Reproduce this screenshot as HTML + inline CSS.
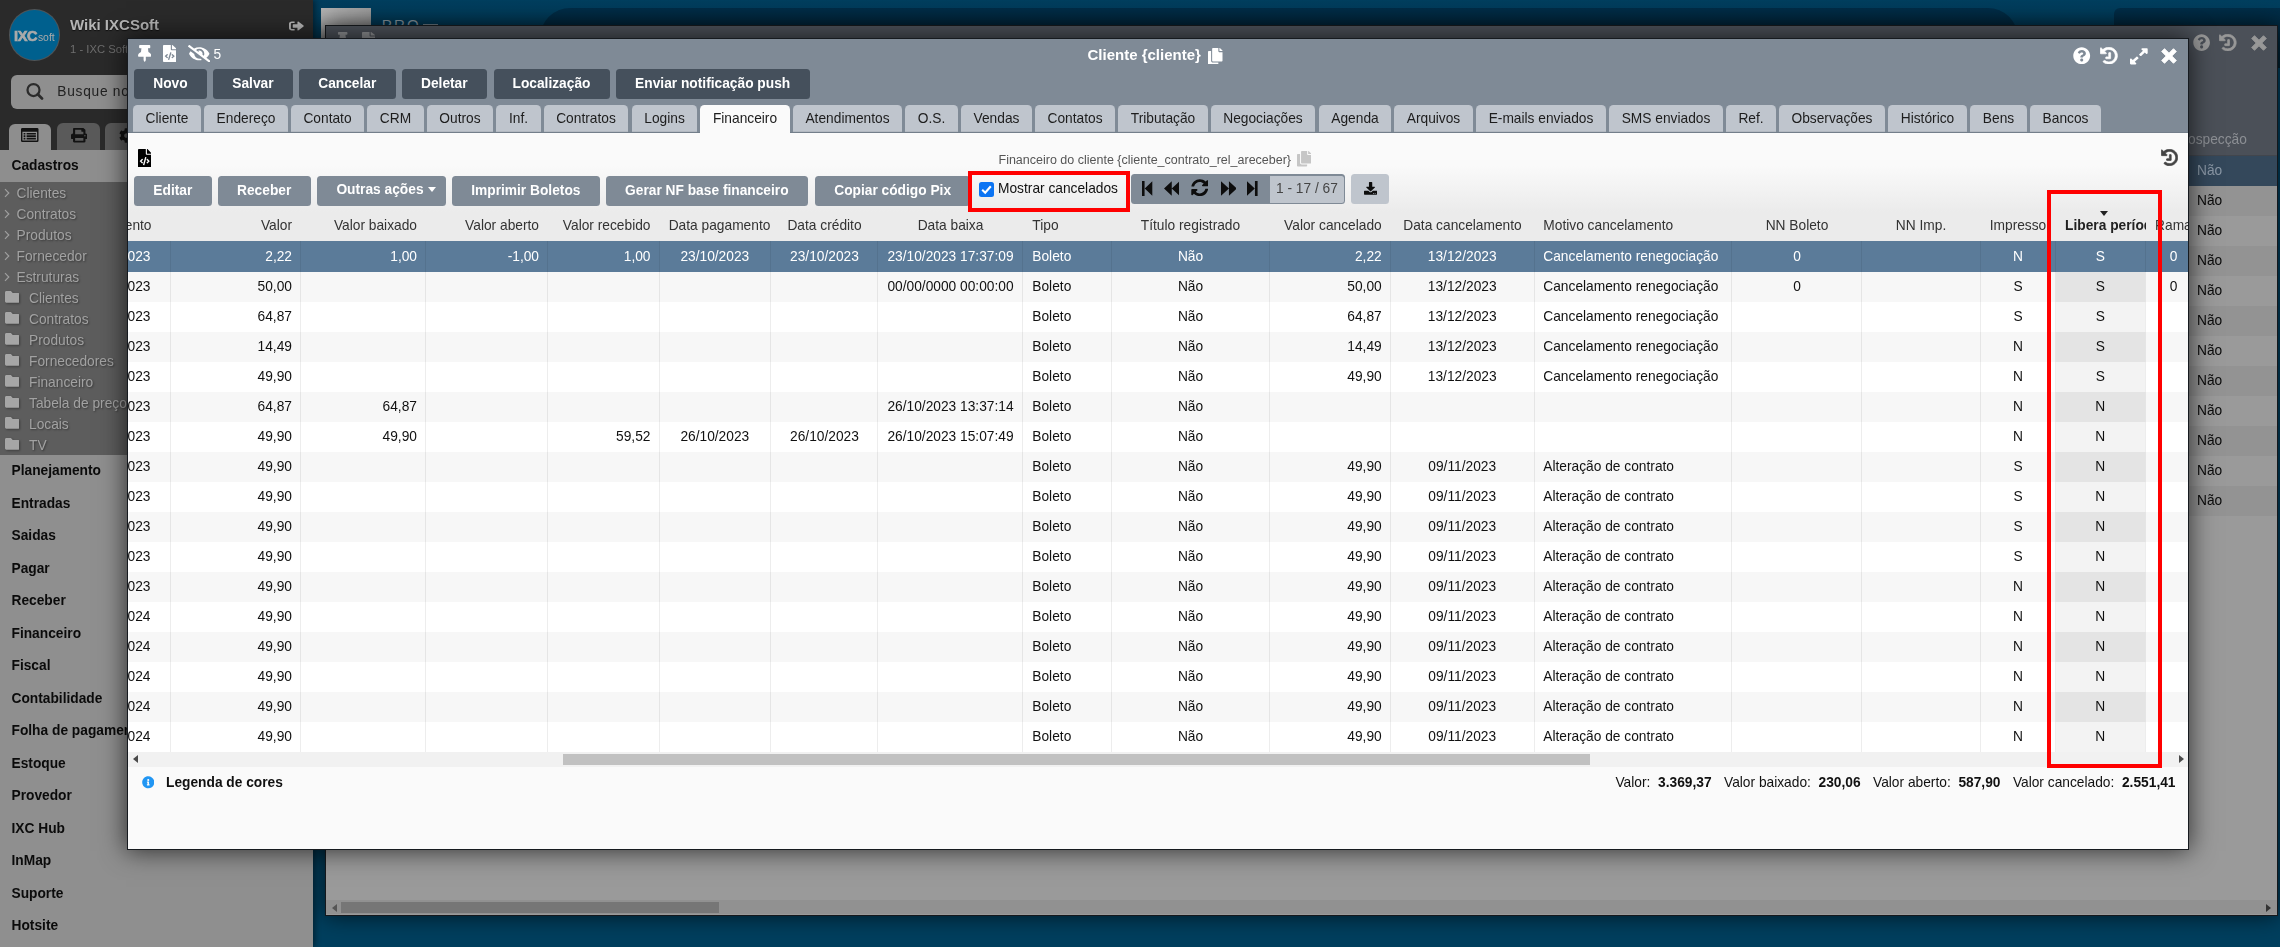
<!DOCTYPE html><html><head><meta charset="utf-8"><title>Cliente</title><style>
*{box-sizing:border-box;margin:0;padding:0}
html,body{width:2280px;height:947px;overflow:hidden}
body{background:#003f5e;font-family:"Liberation Sans",sans-serif;font-size:13.75px;color:#111;position:relative}
.abs{position:absolute}
.t{position:absolute;white-space:nowrap;line-height:16px;margin-top:1px}
.b{font-weight:bold}
#side{will-change:transform;position:absolute;left:0;top:0;width:313px;height:947px;background:#8f8f8f;overflow:hidden;box-shadow:2px 0 6px rgba(0,0,0,.45)}
#bgwin{will-change:transform;position:absolute;left:324.5px;top:25px;width:1952.5px;height:890.5px;background:#9a9a9a;border:1px solid #15181c;overflow:hidden;box-shadow:0 0 22px rgba(0,0,0,.65)}
#modal{will-change:transform;position:absolute;left:128px;top:39px;width:2060px;height:810px;background:#fafafa;overflow:hidden}
#mshadow{position:absolute;left:127px;top:38px;width:2062px;height:812px;box-shadow:0 0 24px 1px rgba(0,0,0,.68);border:1px solid #161a1f}
.btn{position:absolute;top:30.2px;height:29.7px;background:#45505c;border-radius:3.5px;color:#fff;font-weight:bold;text-align:center;line-height:30.5px;white-space:nowrap}
.tb{position:absolute;top:137.2px;height:29.6px;background:#7f8a96;border-radius:3.5px;color:#fff;font-weight:bold;text-align:center;line-height:30.5px;white-space:nowrap}
.tab{position:absolute;top:66px;height:26.8px;background:#bfc5cd;border-radius:4.5px 4.5px 0 0;color:#1d1d1d;text-align:center;line-height:27px;white-space:nowrap;border-bottom:1px solid #b3b9c1}
.tab.act{background:#fafafa;height:28.2px;border-bottom:none}
.row{position:absolute;left:0;width:2060px;height:30px}
.c{position:absolute;top:0;height:30px;line-height:30px;white-space:nowrap}
.vl{position:absolute;top:202px;width:1px;height:511px;background:rgba(0,0,0,.07)}
.h{position:absolute;top:179px;line-height:16px;color:#333;white-space:nowrap}
.si{position:absolute;margin-top:1px;left:16.5px;text-shadow:1px 1px 2px rgba(0,0,0,.4);color:#a2a2a2;line-height:16px;white-space:nowrap}
.sf{position:absolute;margin-top:1px;left:29px;text-shadow:1px 1px 2px rgba(0,0,0,.4);color:#a2a2a2;line-height:16px;white-space:nowrap}
.sm{position:absolute;margin-top:1px;left:11.5px;color:#0b0b0b;font-weight:bold;line-height:16px;white-space:nowrap}
.ft span{margin-left:12.4px}.ft b{margin-left:7.7px}
.bn{position:absolute;left:1871px;line-height:16px;white-space:nowrap;color:#0a0a0a}
</style></head><body>
<div class="abs" style="left:0;top:0;width:2280px;height:30px;background:linear-gradient(#003f5f,#00395680)"></div>
<div class="abs" style="left:540px;top:7.5px;width:1478px;height:60px;border-radius:34px;background:linear-gradient(#002e49,#00202f)"></div>
<div class="abs" style="left:2114px;top:7.5px;width:220px;height:60px;border-radius:6px;background:linear-gradient(#002e49,#00202f)"></div>
<div class="abs" style="left:321px;top:8px;width:50px;height:40px;background:linear-gradient(135deg,#b5b5b5,#8f8f8f)"></div>
<div class="t" style="left:381.7px;top:14.5px;font-size:15px;letter-spacing:2.2px;color:#93a4b0;line-height:18px">PRO</div><div class="abs" style="left:422.8px;top:23.6px;width:15.5px;height:1.5px;background:#7f8f9b"></div>
<div id="bgwin">
<div class="abs" style="left:0;top:0;width:1951px;height:130px;background:#4b5058;border-bottom:1px solid #42464d"></div>
<svg style="position:absolute;left:11.3px;top:5.8px;width:11.4px;height:14px;" viewBox="0 0 384 512" preserveAspectRatio="none"><path fill="#8f9194" d="M298.028 214.267L285.793 96H328c13.255 0 24-10.745 24-24V24c0-13.255-10.745-24-24-24H56C42.745 0 32 10.745 32 24v48c0 13.255 10.745 24 24 24h42.207L85.972 214.267C37.465 236.82 0 277.261 0 328c0 13.255 10.745 24 24 24h136v104.007c0 1.242.289 2.467.845 3.578l24 48c2.941 5.882 11.364 5.893 14.311 0l24-48a8.008 8.008 0 0 0 .845-3.578V352h136c13.255 0 24-10.745 24-24 0-51.183-37.983-91.42-85.972-113.733z"/></svg>
<svg style="position:absolute;left:36px;top:5.8px;width:13px;height:14px;" viewBox="0 0 384 512" preserveAspectRatio="none"><path fill="#8f9194" d="M384 121.941V128H256V0h6.059c6.365 0 12.47 2.529 16.971 7.029l97.941 97.941A24.005 24.005 0 0 1 384 121.941zM248 160c-13.2 0-24-10.8-24-24V0H24C10.745 0 0 10.745 0 24v464c0 13.255 10.745 24 24 24h336c13.255 0 24-10.745 24-24V160H248zM123.206 400.505a5.4 5.4 0 0 1-7.633.246l-64.866-60.812a5.4 5.4 0 0 1 0-7.879l64.866-60.812a5.4 5.4 0 0 1 7.633.246l19.579 20.885a5.4 5.4 0 0 1-.372 7.747L101.65 336l40.763 35.874a5.4 5.4 0 0 1 .372 7.747l-19.579 20.884zm51.295 50.479l-27.453-7.97a5.402 5.402 0 0 1-3.681-6.692l61.44-211.626a5.402 5.402 0 0 1 6.692-3.681l27.452 7.97a5.4 5.4 0 0 1 3.68 6.692l-61.44 211.626a5.397 5.397 0 0 1-6.69 3.681zm160.792-111.045l-64.866 60.812a5.4 5.4 0 0 1-7.633-.246l-19.58-20.885a5.4 5.4 0 0 1 .372-7.747L284.35 336l-40.763-35.874a5.4 5.4 0 0 1-.372-7.747l19.58-20.885a5.4 5.4 0 0 1 7.633-.246l64.866 60.812a5.4 5.4 0 0 1-.001 7.879z"/></svg>
<svg style="position:absolute;left:1866.5px;top:8px;width:17.2px;height:17.2px;" viewBox="0 0 512 512" preserveAspectRatio="none"><path fill="#989898" d="M504 256c0 136.997-111.043 248-248 248S8 392.997 8 256C8 119.083 119.043 8 256 8s248 111.083 248 248zM262.655 90c-54.497 0-89.255 22.957-116.549 63.758-3.536 5.286-2.353 12.415 2.715 16.258l34.699 26.31c5.205 3.947 12.621 3.008 16.665-2.122 17.864-22.658 30.113-35.797 57.303-35.797 20.429 0 45.698 13.148 45.698 32.958 0 14.976-12.363 22.667-32.534 33.976C247.128 238.528 216 254.941 216 296v4c0 6.627 5.373 12 12 12h56c6.627 0 12-5.373 12-12v-1.333c0-28.462 83.186-29.647 83.186-106.667 0-58.002-60.165-102-116.531-102zM256 338c-25.365 0-46 20.635-46 46 0 25.364 20.635 46 46 46s46-20.636 46-46c0-25.365-20.635-46-46-46z"/></svg>
<svg style="position:absolute;left:1893.3px;top:8px;width:17.5px;height:17.2px;" viewBox="0 0 512 512" preserveAspectRatio="none"><path fill="#989898" stroke="#989898" stroke-width="20" stroke-linejoin="round" d="M504 255.531c.253 136.64-111.18 248.372-247.82 248.468-59.015.042-113.223-20.53-155.822-54.911-11.077-8.94-11.905-25.541-1.839-35.607l11.267-11.267c8.609-8.609 22.353-9.551 31.891-1.984C173.062 425.135 212.781 440 256 440c101.705 0 184-82.311 184-184 0-101.705-82.311-184-184-184-48.814 0-93.149 18.969-126.068 49.932l50.754 50.754c10.08 10.08 2.941 27.314-11.313 27.314H24c-8.837 0-16-7.163-16-16V38.627c0-14.254 17.234-21.393 27.314-11.314l49.372 49.372C129.209 34.136 189.552 8 256 8c136.81 0 247.747 110.78 248 247.531zM308 176v160c0 6-5 11-11 11H177c-6 0-11-5-11-11v-34c0-6 5-11 11-11h75V176c0-6 5-11 11-11h34c6 0 11 5 11 11z"/></svg>
<svg style="position:absolute;left:1924.7px;top:8.6px;width:16px;height:16px;" viewBox="0 0 16 16" preserveAspectRatio="none"><path fill="#989898" stroke="#989898" stroke-width="0.9" stroke-linejoin="round" d="M12.49 0.68L15.32 3.51L10.83 8L15.32 12.49L12.49 15.32L8 10.83L3.51 15.32L0.68 12.49L5.17 8L0.68 3.51L3.51 0.68L8 5.17z"/></svg>
<div class="t" style="left:1862px;top:105px;color:#8c8f94">ospecção</div>
<div class="abs" style="left:0;top:130px;width:1951px;height:30px;background:#34485b"></div>
<div class="bn" style="top:137px;color:#8a97a5">Não</div>
<div class="abs" style="left:0;top:160px;width:1951px;height:30px;background:#939393"></div>
<div class="bn" style="top:167px;">Não</div>
<div class="abs" style="left:0;top:190px;width:1951px;height:30px;background:#9a9a9a"></div>
<div class="bn" style="top:197px;">Não</div>
<div class="abs" style="left:0;top:220px;width:1951px;height:30px;background:#939393"></div>
<div class="bn" style="top:227px;">Não</div>
<div class="abs" style="left:0;top:250px;width:1951px;height:30px;background:#9a9a9a"></div>
<div class="bn" style="top:257px;">Não</div>
<div class="abs" style="left:0;top:280px;width:1951px;height:30px;background:#939393"></div>
<div class="bn" style="top:287px;">Não</div>
<div class="abs" style="left:0;top:310px;width:1951px;height:30px;background:#9a9a9a"></div>
<div class="bn" style="top:317px;">Não</div>
<div class="abs" style="left:0;top:340px;width:1951px;height:30px;background:#939393"></div>
<div class="bn" style="top:347px;">Não</div>
<div class="abs" style="left:0;top:370px;width:1951px;height:30px;background:#9a9a9a"></div>
<div class="bn" style="top:377px;">Não</div>
<div class="abs" style="left:0;top:400px;width:1951px;height:30px;background:#939393"></div>
<div class="bn" style="top:407px;">Não</div>
<div class="abs" style="left:0;top:430px;width:1951px;height:30px;background:#9a9a9a"></div>
<div class="bn" style="top:437px;">Não</div>
<div class="abs" style="left:0;top:460px;width:1951px;height:30px;background:#939393"></div>
<div class="bn" style="top:467px;">Não</div>
<div class="abs" style="left:0;top:874px;width:1951px;height:14px;background:#919191"></div>
<div class="abs" style="left:15px;top:876px;width:378px;height:10.5px;background:#767676"></div>
<div class="abs" style="left:5.5px;top:878px;width:0;height:0;border:4px solid transparent;border-right:5.5px solid #555;border-left:none"></div>
<div class="abs" style="left:1940px;top:878px;width:0;height:0;border:4px solid transparent;border-left:5.5px solid #333;border-right:none"></div>
</div>
<div id="side">
<div class="abs" style="left:0;top:0;width:313px;height:150px;background:#2a2a2a"></div>
<div class="abs" style="left:10.2px;top:10px;width:49.3px;height:49.6px;border-radius:50%;background:#00608e;box-shadow:0 0 0 1px #4e5458"></div>
<div class="t b" style="left:13.9px;top:25.2px;font-size:14.6px;letter-spacing:-.300px;color:#aaa;line-height:20px;-webkit-text-stroke:.700px #aaa">IXC<span style="font-size:10.4px;letter-spacing:0;font-weight:normal;-webkit-text-stroke:0;margin-left:.600px">soft</span></div>
<div class="t b" style="left:70px;top:15px;font-size:15px;color:#b6b6b6;line-height:18px;text-shadow:0 1px 1px #111">Wiki IXCSoft</div>
<div class="t" style="left:70px;top:41px;font-size:11.25px;color:#6e6e6e;line-height:14px">1 - IXC Soft</div>
<svg style="position:absolute;left:289px;top:20px;width:15px;height:12px;" viewBox="0 0 512 512" preserveAspectRatio="none"><path fill="#b5b5b5" d="M497 273L329 441c-15 15-41 4.5-41-17v-96H152c-13.3 0-24-10.7-24-24v-96c0-13.3 10.7-24 24-24h136V88c0-21.4 25.9-32 41-17l168 168c9.3 9.4 9.3 24.6 0 34zM192 436v-40c0-6.6-5.4-12-12-12H96c-17.7 0-32-14.3-32-32V160c0-17.7 14.3-32 32-32h84c6.6 0 12-5.4 12-12V76c0-6.6-5.4-12-12-12H96c-53 0-96 43-96 96v192c0 53 43 96 96 96h84c6.6 0 12-5.4 12-12z"/></svg>
<div class="abs" style="left:11px;top:75px;width:292px;height:33.5px;border-radius:6px;background:#8f8f8f"></div>
<svg class="abs" style="left:25px;top:82px;width:19px;height:18px" viewBox="0 0 19 18"><circle cx="8.5" cy="8" r="6" fill="none" stroke="#2b2b2b" stroke-width="2.25"/><path d="M12.8 12.3L17 16.5" stroke="#2b2b2b" stroke-width="2.7" stroke-linecap="round"/></svg>
<div class="t" style="left:57.3px;top:82.2px;font-size:13.75px;letter-spacing:0.72px;color:#222;line-height:18px">Busque no menu</div>
<div class="abs" style="left:9px;top:124px;width:42px;height:27px;border-radius:6px 6px 0 0;background:#8e8e8e"></div>
<div class="abs" style="left:57px;top:123px;width:43px;height:27px;border-radius:6px 6px 0 0;background:#5a5a5a"></div>
<div class="abs" style="left:105px;top:123px;width:43px;height:27px;border-radius:6px 6px 0 0;background:#5a5a5a"></div>
<svg style="position:absolute;left:21px;top:127.8px;width:17.5px;height:14px;" viewBox="0 0 20 16" preserveAspectRatio="none"><path fill="#121212" d="M1.5 0h17A1.5 1.5 0 0 1 20 1.5v13A1.5 1.5 0 0 1 18.5 16h-17A1.5 1.5 0 0 1 0 14.5v-13A1.5 1.5 0 0 1 1.5 0zM1.6 4.2v10.2h16.8V4.2zM3 5.6h2v1.8H3zm3.4 0H17v1.8H6.4zM3 8.4h2v1.8H3zm3.4 0H17v1.8H6.4zM3 11.2h2V13H3zm3.4 0H17V13H6.4z"/></svg>
<svg style="position:absolute;left:70.5px;top:128px;width:16.5px;height:14.5px;" viewBox="0 0 512 512" preserveAspectRatio="none"><path fill="#121212" d="M448 192V77.25c0-8.49-3.37-16.62-9.37-22.63L393.37 9.37c-6-6-14.14-9.37-22.63-9.37H96C78.33 0 64 14.33 64 32v160c-35.35 0-64 28.65-64 64v112c0 8.84 7.16 16 16 16h48v96c0 17.67 14.33 32 32 32h320c17.67 0 32-14.33 32-32v-96h48c8.84 0 16-7.16 16-16V256c0-35.35-28.65-64-64-64zm-64 256H128v-96h256v96zm0-224H128V64h192v48c0 8.84 7.16 16 16 16h48v96zm48 72c-13.25 0-24-10.75-24-24 0-13.26 10.75-24 24-24s24 10.74 24 24c0 13.25-10.75 24-24 24z"/></svg>
<svg style="position:absolute;left:118.5px;top:128px;width:15px;height:15px;" viewBox="0 0 512 512" preserveAspectRatio="none"><path fill="#121212" d="M487.4 315.7l-42.6-24.6c4.3-23.2 4.3-47 0-70.2l42.6-24.6c4.9-2.8 7.1-8.6 5.5-14-11.1-35.6-30-67.8-54.7-94.6-3.8-4.1-10-5.1-14.8-2.3L380.8 110c-17.9-15.4-38.5-27.3-60.8-35.1V25.8c0-5.6-3.9-10.5-9.4-11.7-36.7-8.2-74.3-7.8-109.2 0-5.5 1.2-9.4 6.1-9.4 11.7V75c-22.2 7.9-42.8 19.8-60.8 35.1L88.7 85.5c-4.9-2.8-11-1.9-14.8 2.3-24.7 26.7-43.6 58.9-54.7 94.6-1.7 5.4.6 11.2 5.5 14L67.3 221c-4.3 23.2-4.3 47 0 70.2l-42.6 24.6c-4.9 2.8-7.1 8.6-5.5 14 11.1 35.6 30 67.8 54.7 94.6 3.8 4.1 10 5.1 14.8 2.3l42.6-24.6c17.9 15.4 38.5 27.3 60.8 35.1v49.2c0 5.6 3.9 10.5 9.4 11.7 36.7 8.2 74.3 7.8 109.2 0 5.5-1.2 9.4-6.1 9.4-11.7v-49.2c22.2-7.9 42.8-19.8 60.8-35.1l42.6 24.6c4.9 2.8 11 1.9 14.8-2.3 24.7-26.7 43.6-58.9 54.7-94.6 1.5-5.5-.7-11.3-5.6-14.1zM256 336c-44.1 0-80-35.9-80-80s35.9-80 80-80 80 35.9 80 80-35.9 80-80 80z"/></svg>
<div class="abs" style="left:0;top:150px;width:313px;height:31.5px;background:#8e8e8e"></div>
<div class="t b" style="left:11.5px;top:156.5px;color:#0b0b0b">Cadastros</div>
<div class="abs" style="left:0;top:181.5px;width:313px;height:273px;background:#5d5d5d"></div>
<svg class="abs" style="left:4.2px;top:188px;width:6px;height:10px" viewBox="0 0 6 10"><path d="M1 1.2l3.8 3.8-3.8 3.8" fill="none" stroke="#a0a0a0" stroke-width="1.15"/></svg>
<div class="si" style="top:185px">Clientes</div>
<svg class="abs" style="left:4.2px;top:209px;width:6px;height:10px" viewBox="0 0 6 10"><path d="M1 1.2l3.8 3.8-3.8 3.8" fill="none" stroke="#a0a0a0" stroke-width="1.15"/></svg>
<div class="si" style="top:206px">Contratos</div>
<svg class="abs" style="left:4.2px;top:230px;width:6px;height:10px" viewBox="0 0 6 10"><path d="M1 1.2l3.8 3.8-3.8 3.8" fill="none" stroke="#a0a0a0" stroke-width="1.15"/></svg>
<div class="si" style="top:227px">Produtos</div>
<svg class="abs" style="left:4.2px;top:251px;width:6px;height:10px" viewBox="0 0 6 10"><path d="M1 1.2l3.8 3.8-3.8 3.8" fill="none" stroke="#a0a0a0" stroke-width="1.15"/></svg>
<div class="si" style="top:248px">Fornecedor</div>
<svg class="abs" style="left:4.2px;top:272px;width:6px;height:10px" viewBox="0 0 6 10"><path d="M1 1.2l3.8 3.8-3.8 3.8" fill="none" stroke="#a0a0a0" stroke-width="1.15"/></svg>
<div class="si" style="top:269px">Estruturas</div>
<svg style="position:absolute;left:4.7px;top:289.4px;width:14.6px;height:15.8px;filter:drop-shadow(1px 1px 1px rgba(0,0,0,.35))" viewBox="0 0 512 512" preserveAspectRatio="none"><path fill="#a6a6a6" d="M464 128H272l-64-64H48C21.49 64 0 85.49 0 112v288c0 26.51 21.49 48 48 48h416c26.51 0 48-21.49 48-48V176c0-26.51-21.49-48-48-48z"/></svg>
<div class="sf" style="top:290px">Clientes</div>
<svg style="position:absolute;left:4.7px;top:310.4px;width:14.6px;height:15.8px;filter:drop-shadow(1px 1px 1px rgba(0,0,0,.35))" viewBox="0 0 512 512" preserveAspectRatio="none"><path fill="#a6a6a6" d="M464 128H272l-64-64H48C21.49 64 0 85.49 0 112v288c0 26.51 21.49 48 48 48h416c26.51 0 48-21.49 48-48V176c0-26.51-21.49-48-48-48z"/></svg>
<div class="sf" style="top:311px">Contratos</div>
<svg style="position:absolute;left:4.7px;top:331.4px;width:14.6px;height:15.8px;filter:drop-shadow(1px 1px 1px rgba(0,0,0,.35))" viewBox="0 0 512 512" preserveAspectRatio="none"><path fill="#a6a6a6" d="M464 128H272l-64-64H48C21.49 64 0 85.49 0 112v288c0 26.51 21.49 48 48 48h416c26.51 0 48-21.49 48-48V176c0-26.51-21.49-48-48-48z"/></svg>
<div class="sf" style="top:332px">Produtos</div>
<svg style="position:absolute;left:4.7px;top:352.4px;width:14.6px;height:15.8px;filter:drop-shadow(1px 1px 1px rgba(0,0,0,.35))" viewBox="0 0 512 512" preserveAspectRatio="none"><path fill="#a6a6a6" d="M464 128H272l-64-64H48C21.49 64 0 85.49 0 112v288c0 26.51 21.49 48 48 48h416c26.51 0 48-21.49 48-48V176c0-26.51-21.49-48-48-48z"/></svg>
<div class="sf" style="top:353px">Fornecedores</div>
<svg style="position:absolute;left:4.7px;top:373.4px;width:14.6px;height:15.8px;filter:drop-shadow(1px 1px 1px rgba(0,0,0,.35))" viewBox="0 0 512 512" preserveAspectRatio="none"><path fill="#a6a6a6" d="M464 128H272l-64-64H48C21.49 64 0 85.49 0 112v288c0 26.51 21.49 48 48 48h416c26.51 0 48-21.49 48-48V176c0-26.51-21.49-48-48-48z"/></svg>
<div class="sf" style="top:374px">Financeiro</div>
<svg style="position:absolute;left:4.7px;top:394.4px;width:14.6px;height:15.8px;filter:drop-shadow(1px 1px 1px rgba(0,0,0,.35))" viewBox="0 0 512 512" preserveAspectRatio="none"><path fill="#a6a6a6" d="M464 128H272l-64-64H48C21.49 64 0 85.49 0 112v288c0 26.51 21.49 48 48 48h416c26.51 0 48-21.49 48-48V176c0-26.51-21.49-48-48-48z"/></svg>
<div class="sf" style="top:395px">Tabela de preço</div>
<svg style="position:absolute;left:4.7px;top:415.4px;width:14.6px;height:15.8px;filter:drop-shadow(1px 1px 1px rgba(0,0,0,.35))" viewBox="0 0 512 512" preserveAspectRatio="none"><path fill="#a6a6a6" d="M464 128H272l-64-64H48C21.49 64 0 85.49 0 112v288c0 26.51 21.49 48 48 48h416c26.51 0 48-21.49 48-48V176c0-26.51-21.49-48-48-48z"/></svg>
<div class="sf" style="top:416px">Locais</div>
<svg style="position:absolute;left:4.7px;top:436.4px;width:14.6px;height:15.8px;filter:drop-shadow(1px 1px 1px rgba(0,0,0,.35))" viewBox="0 0 512 512" preserveAspectRatio="none"><path fill="#a6a6a6" d="M464 128H272l-64-64H48C21.49 64 0 85.49 0 112v288c0 26.51 21.49 48 48 48h416c26.51 0 48-21.49 48-48V176c0-26.51-21.49-48-48-48z"/></svg>
<div class="sf" style="top:437px">TV</div>
<div class="sm" style="top:462px">Planejamento</div>
<div class="sm" style="top:494.5px">Entradas</div>
<div class="sm" style="top:527px">Saidas</div>
<div class="sm" style="top:559.5px">Pagar</div>
<div class="sm" style="top:592px">Receber</div>
<div class="sm" style="top:624.5px">Financeiro</div>
<div class="sm" style="top:657px">Fiscal</div>
<div class="sm" style="top:689.5px">Contabilidade</div>
<div class="sm" style="top:722px">Folha de pagamento</div>
<div class="sm" style="top:754.5px">Estoque</div>
<div class="sm" style="top:787px">Provedor</div>
<div class="sm" style="top:819.5px">IXC Hub</div>
<div class="sm" style="top:852px">InMap</div>
<div class="sm" style="top:884.5px">Suporte</div>
<div class="sm" style="top:917px">Hotsite</div>
</div>
<div id="mshadow"></div>
<div id="modal">
<div class="abs" style="left:0;top:0;width:2060px;height:94px;background:#7f8a96;border-bottom:1.3px solid #737e8a"></div>
<svg style="position:absolute;left:9.8px;top:6px;width:13.4px;height:17px;" viewBox="0 0 384 512" preserveAspectRatio="none"><path fill="#fff" d="M298.028 214.267L285.793 96H328c13.255 0 24-10.745 24-24V24c0-13.255-10.745-24-24-24H56C42.745 0 32 10.745 32 24v48c0 13.255 10.745 24 24 24h42.207L85.972 214.267C37.465 236.82 0 277.261 0 328c0 13.255 10.745 24 24 24h136v104.007c0 1.242.289 2.467.845 3.578l24 48c2.941 5.882 11.364 5.893 14.311 0l24-48a8.008 8.008 0 0 0 .845-3.578V352h136c13.255 0 24-10.745 24-24 0-51.183-37.983-91.42-85.972-113.733z"/></svg>
<svg style="position:absolute;left:34.8px;top:6px;width:13.4px;height:17px;" viewBox="0 0 384 512" preserveAspectRatio="none"><path fill="#fff" d="M384 121.941V128H256V0h6.059c6.365 0 12.47 2.529 16.971 7.029l97.941 97.941A24.005 24.005 0 0 1 384 121.941zM248 160c-13.2 0-24-10.8-24-24V0H24C10.745 0 0 10.745 0 24v464c0 13.255 10.745 24 24 24h336c13.255 0 24-10.745 24-24V160H248zM123.206 400.505a5.4 5.4 0 0 1-7.633.246l-64.866-60.812a5.4 5.4 0 0 1 0-7.879l64.866-60.812a5.4 5.4 0 0 1 7.633.246l19.579 20.885a5.4 5.4 0 0 1-.372 7.747L101.65 336l40.763 35.874a5.4 5.4 0 0 1 .372 7.747l-19.579 20.884zm51.295 50.479l-27.453-7.97a5.402 5.402 0 0 1-3.681-6.692l61.44-211.626a5.402 5.402 0 0 1 6.692-3.681l27.452 7.97a5.4 5.4 0 0 1 3.68 6.692l-61.44 211.626a5.397 5.397 0 0 1-6.69 3.681zm160.792-111.045l-64.866 60.812a5.4 5.4 0 0 1-7.633-.246l-19.58-20.885a5.4 5.4 0 0 1 .372-7.747L284.35 336l-40.763-35.874a5.4 5.4 0 0 1-.372-7.747l19.58-20.885a5.4 5.4 0 0 1 7.633-.246l64.866 60.812a5.4 5.4 0 0 1-.001 7.879z"/></svg>
<svg style="position:absolute;left:59.5px;top:5.7px;width:22.5px;height:17.5px;" viewBox="0 0 640 512" preserveAspectRatio="none"><path fill="#fff" d="M320 400c-75.85 0-137.25-58.71-142.9-133.11L72.2 185.82c-13.79 17.3-26.48 35.59-36.72 55.59a32.35 32.35 0 0 0 0 29.19C89.71 376.41 197.07 448 320 448c26.91 0 52.87-4 77.89-10.46L346 397.39a144.13 144.13 0 0 1-26 2.61zm313.82 58.1l-110.55-85.44a331.25 331.25 0 0 0 81.25-102.07 32.35 32.35 0 0 0 0-29.19C550.29 135.59 442.93 64 320 64a308.15 308.15 0 0 0-147.32 37.7L45.46 3.37A16 16 0 0 0 23 6.18L3.37 31.45A16 16 0 0 0 6.18 53.9l588.36 454.73a16 16 0 0 0 22.46-2.81l19.64-25.27a16 16 0 0 0-2.82-22.45zm-183.72-142l-39.3-30.38A94.75 94.75 0 0 0 416 256a94.76 94.76 0 0 0-121.31-92.21A47.65 47.65 0 0 1 304 192a46.64 46.64 0 0 1-1.54 10l-73.61-56.89A142.31 142.31 0 0 1 320 112a143.92 143.92 0 0 1 144 144c0 21.63-5.29 41.79-13.9 60.11z"/></svg>
<div class="t" style="left:85.5px;top:7px;color:#fff">5</div>
<div class="t b" style="left:959.5px;top:6px;font-size:15px;color:#fff;line-height:18px">Cliente {cliente}</div>
<svg style="position:absolute;left:1080px;top:8.5px;width:14.5px;height:16.5px;" viewBox="0 0 448 512" preserveAspectRatio="none"><path fill="#fff" d="M320 448v40c0 13.255-10.745 24-24 24H24c-13.255 0-24-10.745-24-24V120c0-13.255 10.745-24 24-24h72v296c0 30.879 25.121 56 56 56h168zm0-344V0H152c-13.255 0-24 10.745-24 24v368c0 13.255 10.745 24 24 24h272c13.255 0 24-10.745 24-24V128H344c-13.2 0-24-10.8-24-24zm120.971-31.029L375.029 7.029A24 24 0 0 0 358.059 0H352v96h96v-6.059a24 24 0 0 0-7.029-16.97z"/></svg>
<svg style="position:absolute;left:1945.3px;top:8px;width:17.4px;height:17.4px;" viewBox="0 0 512 512" preserveAspectRatio="none"><path fill="#fff" d="M504 256c0 136.997-111.043 248-248 248S8 392.997 8 256C8 119.083 119.043 8 256 8s248 111.083 248 248zM262.655 90c-54.497 0-89.255 22.957-116.549 63.758-3.536 5.286-2.353 12.415 2.715 16.258l34.699 26.31c5.205 3.947 12.621 3.008 16.665-2.122 17.864-22.658 30.113-35.797 57.303-35.797 20.429 0 45.698 13.148 45.698 32.958 0 14.976-12.363 22.667-32.534 33.976C247.128 238.528 216 254.941 216 296v4c0 6.627 5.373 12 12 12h56c6.627 0 12-5.373 12-12v-1.333c0-28.462 83.186-29.647 83.186-106.667 0-58.002-60.165-102-116.531-102zM256 338c-25.365 0-46 20.635-46 46 0 25.364 20.635 46 46 46s46-20.636 46-46c0-25.365-20.635-46-46-46z"/></svg>
<svg style="position:absolute;left:1972px;top:8px;width:17.7px;height:17.4px;" viewBox="0 0 512 512" preserveAspectRatio="none"><path fill="#fff" stroke="#fff" stroke-width="20" stroke-linejoin="round" d="M504 255.531c.253 136.64-111.18 248.372-247.82 248.468-59.015.042-113.223-20.53-155.822-54.911-11.077-8.94-11.905-25.541-1.839-35.607l11.267-11.267c8.609-8.609 22.353-9.551 31.891-1.984C173.062 425.135 212.781 440 256 440c101.705 0 184-82.311 184-184 0-101.705-82.311-184-184-184-48.814 0-93.149 18.969-126.068 49.932l50.754 50.754c10.08 10.08 2.941 27.314-11.313 27.314H24c-8.837 0-16-7.163-16-16V38.627c0-14.254 17.234-21.393 27.314-11.314l49.372 49.372C129.209 34.136 189.552 8 256 8c136.81 0 247.747 110.78 248 247.531zM308 176v160c0 6-5 11-11 11H177c-6 0-11-5-11-11v-34c0-6 5-11 11-11h75V176c0-6 5-11 11-11h34c6 0 11 5 11 11z"/></svg>
<svg style="position:absolute;left:2002px;top:7.5px;width:17.7px;height:18.6px;" viewBox="0 0 448 512" preserveAspectRatio="none"><path fill="#fff" d="M212.686 315.314L120 408l32.922 31.029c15.12 15.12 4.412 40.971-16.97 40.971h-112C10.697 480 0 469.255 0 456V344c0-21.382 25.803-32.09 40.922-16.971L72 360l92.686-92.686c6.248-6.248 16.379-6.248 22.627 0l25.373 25.373c6.249 6.248 6.249 16.378 0 22.627zm22.628-118.628L328 104l-32.922-31.029C279.958 57.851 290.666 32 312.048 32h112C437.303 32 448 42.745 448 56v112c0 21.382-25.803 32.09-40.922 16.971L376 152l-92.686 92.686c-6.248 6.248-16.379 6.248-22.627 0l-25.373-25.373c-6.249-6.248-6.249-16.378 0-22.627z"/></svg>
<svg style="position:absolute;left:2033.1px;top:8.6px;width:16px;height:16px;" viewBox="0 0 16 16" preserveAspectRatio="none"><path fill="#fff" stroke="#fff" stroke-width="0.9" stroke-linejoin="round" d="M12.49 0.68L15.32 3.51L10.83 8L15.32 12.49L12.49 15.32L8 10.83L3.51 15.32L0.68 12.49L5.17 8L0.68 3.51L3.51 0.68L8 5.17z"/></svg>
<div class="btn" style="left:6px;width:72.8px">Novo</div>
<div class="btn" style="left:85px;width:79.8px">Salvar</div>
<div class="btn" style="left:171px;width:96.5px">Cancelar</div>
<div class="btn" style="left:273.8px;width:85px">Deletar</div>
<div class="btn" style="left:365.5px;width:116px">Localização</div>
<div class="btn" style="left:487.5px;width:194.3px">Enviar notificação push</div>
<div class="tab" style="left:5px;width:68px">Cliente</div>
<div class="tab" style="left:76px;width:84px">Endereço</div>
<div class="tab" style="left:163px;width:73px">Contato</div>
<div class="tab" style="left:239px;width:57px">CRM</div>
<div class="tab" style="left:299px;width:66px">Outros</div>
<div class="tab" style="left:368px;width:45px">Inf.</div>
<div class="tab" style="left:416px;width:84px">Contratos</div>
<div class="tab" style="left:504px;width:65px">Logins</div>
<div class="tab act" style="left:572px;width:90px">Financeiro</div>
<div class="tab" style="left:665px;width:109px">Atendimentos</div>
<div class="tab" style="left:777px;width:53px">O.S.</div>
<div class="tab" style="left:833px;width:71px">Vendas</div>
<div class="tab" style="left:907px;width:80px">Contatos</div>
<div class="tab" style="left:990px;width:90px">Tributação</div>
<div class="tab" style="left:1083px;width:104px">Negociações</div>
<div class="tab" style="left:1191px;width:72px">Agenda</div>
<div class="tab" style="left:1266px;width:79px">Arquivos</div>
<div class="tab" style="left:1348px;width:130px">E-mails enviados</div>
<div class="tab" style="left:1481px;width:114px">SMS enviados</div>
<div class="tab" style="left:1598px;width:50px">Ref.</div>
<div class="tab" style="left:1651px;width:106px">Observações</div>
<div class="tab" style="left:1760px;width:79px">Histórico</div>
<div class="tab" style="left:1842px;width:57px">Bens</div>
<div class="tab" style="left:1902px;width:71px">Bancos</div>
<div class="abs" style="left:0;top:95.3px;width:2060px;height:107.7px;background:linear-gradient(#fafafa 0,#fafafa 29%,#ebebeb 72%,#ebebeb 100%)"></div>
<svg style="position:absolute;left:9.8px;top:109.5px;width:13.4px;height:18.5px;" viewBox="0 0 384 512" preserveAspectRatio="none"><path fill="#000" d="M384 121.941V128H256V0h6.059c6.365 0 12.47 2.529 16.971 7.029l97.941 97.941A24.005 24.005 0 0 1 384 121.941zM248 160c-13.2 0-24-10.8-24-24V0H24C10.745 0 0 10.745 0 24v464c0 13.255 10.745 24 24 24h336c13.255 0 24-10.745 24-24V160H248zM123.206 400.505a5.4 5.4 0 0 1-7.633.246l-64.866-60.812a5.4 5.4 0 0 1 0-7.879l64.866-60.812a5.4 5.4 0 0 1 7.633.246l19.579 20.885a5.4 5.4 0 0 1-.372 7.747L101.65 336l40.763 35.874a5.4 5.4 0 0 1 .372 7.747l-19.579 20.884zm51.295 50.479l-27.453-7.97a5.402 5.402 0 0 1-3.681-6.692l61.44-211.626a5.402 5.402 0 0 1 6.692-3.681l27.452 7.97a5.4 5.4 0 0 1 3.68 6.692l-61.44 211.626a5.397 5.397 0 0 1-6.69 3.681zm160.792-111.045l-64.866 60.812a5.4 5.4 0 0 1-7.633-.246l-19.58-20.885a5.4 5.4 0 0 1 .372-7.747L284.35 336l-40.763-35.874a5.4 5.4 0 0 1-.372-7.747l19.58-20.885a5.4 5.4 0 0 1 7.633-.246l64.866 60.812a5.4 5.4 0 0 1-.001 7.879z"/></svg>
<div class="t" style="left:870.5px;top:112.5px;font-size:12.5px;color:#555;line-height:15px">Financeiro do cliente {cliente_contrato_rel_areceber}</div>
<svg style="position:absolute;left:1168.8px;top:112px;width:14.2px;height:15.5px;" viewBox="0 0 448 512" preserveAspectRatio="none"><path fill="#c6c6c6" d="M320 448v40c0 13.255-10.745 24-24 24H24c-13.255 0-24-10.745-24-24V120c0-13.255 10.745-24 24-24h72v296c0 30.879 25.121 56 56 56h168zm0-344V0H152c-13.255 0-24 10.745-24 24v368c0 13.255 10.745 24 24 24h272c13.255 0 24-10.745 24-24V128H344c-13.2 0-24-10.8-24-24zm120.971-31.029L375.029 7.029A24 24 0 0 0 358.059 0H352v96h96v-6.059a24 24 0 0 0-7.029-16.97z"/></svg>
<svg style="position:absolute;left:2033px;top:110.3px;width:17px;height:17px;" viewBox="0 0 512 512" preserveAspectRatio="none"><path fill="#444" stroke="#444" stroke-width="20" stroke-linejoin="round" d="M504 255.531c.253 136.64-111.18 248.372-247.82 248.468-59.015.042-113.223-20.53-155.822-54.911-11.077-8.94-11.905-25.541-1.839-35.607l11.267-11.267c8.609-8.609 22.353-9.551 31.891-1.984C173.062 425.135 212.781 440 256 440c101.705 0 184-82.311 184-184 0-101.705-82.311-184-184-184-48.814 0-93.149 18.969-126.068 49.932l50.754 50.754c10.08 10.08 2.941 27.314-11.313 27.314H24c-8.837 0-16-7.163-16-16V38.627c0-14.254 17.234-21.393 27.314-11.314l49.372 49.372C129.209 34.136 189.552 8 256 8c136.81 0 247.747 110.78 248 247.531zM308 176v160c0 6-5 11-11 11H177c-6 0-11-5-11-11v-34c0-6 5-11 11-11h75V176c0-6 5-11 11-11h34c6 0 11 5 11 11z"/></svg>
<div class="tb" style="left:6px;width:77.7px">Editar</div>
<div class="tb" style="left:89.7px;width:93px">Receber</div>
<div class="tb" style="left:188.7px;width:129px;line-height:28.5px;padding-right:2.4px">Outras ações<span style="position:absolute;right:9.8px;top:10.8px;width:0;height:0;border:4.3px solid transparent;border-top:5px solid #fff;border-bottom:none"></span></div>
<div class="tb" style="left:323.7px;width:148.3px">Imprimir Boletos</div>
<div class="tb" style="left:477.7px;width:202.3px">Gerar NF base financeiro</div>
<div class="tb" style="left:687px;width:155.3px">Copiar código Pix</div>
<div class="abs" style="left:851px;top:143.2px;width:15px;height:15px;border-radius:2.5px;background:#0b74f3"></div>
<svg class="abs" style="left:851px;top:143.2px;width:15px;height:15px" viewBox="0 0 15 15"><path d="M3.2 7.8l3 2.9 5.6-6.5" fill="none" stroke="#fff" stroke-width="2.1"/></svg>
<div class="t" style="left:870px;top:140.5px;color:#111">Mostrar cancelados</div>
<div class="abs" style="left:1003.3px;top:135.4px;width:213.7px;height:29.4px;border-radius:3.5px;background:#7f8a96"></div>
<div class="abs" style="left:1141.5px;top:136.6px;width:74.3px;height:27px;border-radius:0 2.5px 2.5px 0;background:#bfc5cd"></div>
<svg style="position:absolute;left:1014.4px;top:142.3px;width:10.3px;height:15px;" viewBox="0 0 12 16" preserveAspectRatio="none"><path fill="#0d0d0d" d="M0 0h3v16H0zM12 0.2v15.6L3.2 8z"/></svg>
<svg style="position:absolute;left:1035.6px;top:142.3px;width:15.5px;height:15px;" viewBox="0 0 16 16" preserveAspectRatio="none"><path fill="#0d0d0d" d="M8 0.2v15.6L0 8zM16 0.2v15.6L8 8z"/></svg>
<svg style="position:absolute;left:1062.5px;top:140.3px;width:17.5px;height:17.4px;" viewBox="0 0 512 512" preserveAspectRatio="none"><path fill="#0d0d0d" d="M370.72 133.28C339.458 104.008 298.888 87.962 255.848 88c-77.458.068-144.328 53.178-162.791 126.85-1.344 5.363-6.122 9.15-11.651 9.15H24.103c-7.498 0-13.194-6.807-11.807-14.176C33.933 94.924 134.813 8 256 8c66.448 0 126.791 26.136 171.315 68.685L463.03 40.97C478.149 25.851 504 36.559 504 57.941V192c0 13.255-10.745 24-24 24H345.941c-21.382 0-32.09-25.851-16.971-40.971l41.75-41.749zM32 296h134.059c21.382 0 32.09 25.851 16.971 40.971l-41.75 41.75c31.262 29.273 71.835 45.319 114.876 45.28 77.418-.07 144.315-53.144 162.787-126.849 1.344-5.363 6.122-9.15 11.651-9.15h57.304c7.498 0 13.194 6.807 11.807 14.176C478.067 417.076 377.187 504 256 504c-66.448 0-126.791-26.136-171.315-68.685L48.97 471.03C33.851 486.149 8 475.441 8 454.059V320c0-13.255 10.745-24 24-24z"/></svg>
<svg style="position:absolute;left:1092.5px;top:142.3px;width:15.9px;height:15px;" viewBox="0 0 16 16" preserveAspectRatio="none"><path fill="#0d0d0d" d="M8 0.2v15.6L16 8zM0 0.2v15.6L8 8z"/></svg>
<svg style="position:absolute;left:1119px;top:142.3px;width:10.6px;height:15px;" viewBox="0 0 12 16" preserveAspectRatio="none"><path fill="#0d0d0d" d="M12 0H9v16h3zM0 0.2v15.6L8.8 8z"/></svg>
<div class="t" style="left:1148px;top:141px;color:#454545">1 - 17 / 67</div>
<div class="abs" style="left:1223.2px;top:135.4px;width:37.6px;height:29.4px;border-radius:3.5px;background:#bfc5cd"></div>
<svg style="position:absolute;left:1235.6px;top:143px;width:13.2px;height:12.7px;" viewBox="0 0 512 512" preserveAspectRatio="none"><path fill="#0d0d0d" d="M216 0h80c13.3 0 24 10.7 24 24v168h87.7c17.8 0 26.7 21.5 14.1 34.1L269.7 378.3c-7.5 7.5-19.8 7.5-27.3 0L90.1 226.1c-12.6-12.6-3.7-34.1 14.1-34.1H192V24c0-13.3 10.7-24 24-24zm296 376v112c0 13.3-10.7 24-24 24H24c-13.3 0-24-10.7-24-24V376c0-13.3 10.7-24 24-24h146.7l49 49c20.1 20.1 52.5 20.1 72.6 0l49-49H488c13.3 0 24 10.7 24 24zm-124 88c0-11-9-20-20-20s-20 9-20 20 9 20 20 20 20-9 20-20zm64 0c0-11-9-20-20-20s-20 9-20 20 9 20 20 20 20-9 20-20z"/></svg>
<div class="row" style="top:203px;background:#5b7b99;color:#fff;box-shadow:0 -1px 0 #5b7b99">
<span class="c" style="right:2037.5px">023</span><span class="c" style="right:1896px">2,22</span><span class="c" style="right:1771px">1,00</span><span class="c" style="right:1649px">-1,00</span><span class="c" style="right:1537.5px">1,00</span>
<span class="c" style="left:486.8px;width:200px;text-align:center">23/10/2023</span><span class="c" style="left:596.5px;width:200px;text-align:center">23/10/2023</span><span class="c" style="left:722.5px;width:200px;text-align:center">23/10/2023 17:37:09</span><span class="c" style="left:904.3px">Boleto</span><span class="c" style="left:962.5px;width:200px;text-align:center">Não</span>
<span class="c" style="right:806.3px">2,22</span><span class="c" style="left:1234.2px;width:200px;text-align:center">13/12/2023</span><span class="c" style="left:1415.3px">Cancelamento renegociação</span><span class="c" style="left:1569px;width:200px;text-align:center">0</span><span class="c" style="left:1790px;width:200px;text-align:center">N</span><span class="c" style="left:1872.3px;width:200px;text-align:center">S</span><span class="c" style="left:1945.5px;width:200px;text-align:center">0</span>
</div>
<div class="row" style="top:233px;background:#f7f7f7;color:#111">
<span class="abs" style="left:1928px;top:0;width:89.3px;height:30px;background:#e4e4e4"></span>
<span class="c" style="right:2037.5px">023</span><span class="c" style="right:1896px">50,00</span>
<span class="c" style="left:722.5px;width:200px;text-align:center">00/00/0000 00:00:00</span><span class="c" style="left:904.3px">Boleto</span><span class="c" style="left:962.5px;width:200px;text-align:center">Não</span>
<span class="c" style="right:806.3px">50,00</span><span class="c" style="left:1234.2px;width:200px;text-align:center">13/12/2023</span><span class="c" style="left:1415.3px">Cancelamento renegociação</span><span class="c" style="left:1569px;width:200px;text-align:center">0</span><span class="c" style="left:1790px;width:200px;text-align:center">S</span><span class="c" style="left:1872.3px;width:200px;text-align:center">S</span><span class="c" style="left:1945.5px;width:200px;text-align:center">0</span>
</div>
<div class="row" style="top:263px;background:#fff;color:#111">
<span class="abs" style="left:1928px;top:0;width:89.3px;height:30px;background:#f3f3f3"></span>
<span class="c" style="right:2037.5px">023</span><span class="c" style="right:1896px">64,87</span>
<span class="c" style="left:904.3px">Boleto</span><span class="c" style="left:962.5px;width:200px;text-align:center">Não</span>
<span class="c" style="right:806.3px">64,87</span><span class="c" style="left:1234.2px;width:200px;text-align:center">13/12/2023</span><span class="c" style="left:1415.3px">Cancelamento renegociação</span><span class="c" style="left:1790px;width:200px;text-align:center">S</span><span class="c" style="left:1872.3px;width:200px;text-align:center">S</span>
</div>
<div class="row" style="top:293px;background:#f7f7f7;color:#111">
<span class="abs" style="left:1928px;top:0;width:89.3px;height:30px;background:#e4e4e4"></span>
<span class="c" style="right:2037.5px">023</span><span class="c" style="right:1896px">14,49</span>
<span class="c" style="left:904.3px">Boleto</span><span class="c" style="left:962.5px;width:200px;text-align:center">Não</span>
<span class="c" style="right:806.3px">14,49</span><span class="c" style="left:1234.2px;width:200px;text-align:center">13/12/2023</span><span class="c" style="left:1415.3px">Cancelamento renegociação</span><span class="c" style="left:1790px;width:200px;text-align:center">N</span><span class="c" style="left:1872.3px;width:200px;text-align:center">S</span>
</div>
<div class="row" style="top:323px;background:#fff;color:#111">
<span class="abs" style="left:1928px;top:0;width:89.3px;height:30px;background:#f3f3f3"></span>
<span class="c" style="right:2037.5px">023</span><span class="c" style="right:1896px">49,90</span>
<span class="c" style="left:904.3px">Boleto</span><span class="c" style="left:962.5px;width:200px;text-align:center">Não</span>
<span class="c" style="right:806.3px">49,90</span><span class="c" style="left:1234.2px;width:200px;text-align:center">13/12/2023</span><span class="c" style="left:1415.3px">Cancelamento renegociação</span><span class="c" style="left:1790px;width:200px;text-align:center">N</span><span class="c" style="left:1872.3px;width:200px;text-align:center">S</span>
</div>
<div class="row" style="top:353px;background:#f7f7f7;color:#111">
<span class="abs" style="left:1928px;top:0;width:89.3px;height:30px;background:#e4e4e4"></span>
<span class="c" style="right:2037.5px">023</span><span class="c" style="right:1896px">64,87</span><span class="c" style="right:1771px">64,87</span>
<span class="c" style="left:722.5px;width:200px;text-align:center">26/10/2023 13:37:14</span><span class="c" style="left:904.3px">Boleto</span><span class="c" style="left:962.5px;width:200px;text-align:center">Não</span>
<span class="c" style="left:1790px;width:200px;text-align:center">N</span><span class="c" style="left:1872.3px;width:200px;text-align:center">N</span>
</div>
<div class="row" style="top:383px;background:#fff;color:#111">
<span class="abs" style="left:1928px;top:0;width:89.3px;height:30px;background:#f3f3f3"></span>
<span class="c" style="right:2037.5px">023</span><span class="c" style="right:1896px">49,90</span><span class="c" style="right:1771px">49,90</span><span class="c" style="right:1537.5px">59,52</span>
<span class="c" style="left:486.8px;width:200px;text-align:center">26/10/2023</span><span class="c" style="left:596.5px;width:200px;text-align:center">26/10/2023</span><span class="c" style="left:722.5px;width:200px;text-align:center">26/10/2023 15:07:49</span><span class="c" style="left:904.3px">Boleto</span><span class="c" style="left:962.5px;width:200px;text-align:center">Não</span>
<span class="c" style="left:1790px;width:200px;text-align:center">N</span><span class="c" style="left:1872.3px;width:200px;text-align:center">N</span>
</div>
<div class="row" style="top:413px;background:#f7f7f7;color:#111">
<span class="abs" style="left:1928px;top:0;width:89.3px;height:30px;background:#e4e4e4"></span>
<span class="c" style="right:2037.5px">023</span><span class="c" style="right:1896px">49,90</span>
<span class="c" style="left:904.3px">Boleto</span><span class="c" style="left:962.5px;width:200px;text-align:center">Não</span>
<span class="c" style="right:806.3px">49,90</span><span class="c" style="left:1234.2px;width:200px;text-align:center">09/11/2023</span><span class="c" style="left:1415.3px">Alteração de contrato</span><span class="c" style="left:1790px;width:200px;text-align:center">S</span><span class="c" style="left:1872.3px;width:200px;text-align:center">N</span>
</div>
<div class="row" style="top:443px;background:#fff;color:#111">
<span class="abs" style="left:1928px;top:0;width:89.3px;height:30px;background:#f3f3f3"></span>
<span class="c" style="right:2037.5px">023</span><span class="c" style="right:1896px">49,90</span>
<span class="c" style="left:904.3px">Boleto</span><span class="c" style="left:962.5px;width:200px;text-align:center">Não</span>
<span class="c" style="right:806.3px">49,90</span><span class="c" style="left:1234.2px;width:200px;text-align:center">09/11/2023</span><span class="c" style="left:1415.3px">Alteração de contrato</span><span class="c" style="left:1790px;width:200px;text-align:center">S</span><span class="c" style="left:1872.3px;width:200px;text-align:center">N</span>
</div>
<div class="row" style="top:473px;background:#f7f7f7;color:#111">
<span class="abs" style="left:1928px;top:0;width:89.3px;height:30px;background:#e4e4e4"></span>
<span class="c" style="right:2037.5px">023</span><span class="c" style="right:1896px">49,90</span>
<span class="c" style="left:904.3px">Boleto</span><span class="c" style="left:962.5px;width:200px;text-align:center">Não</span>
<span class="c" style="right:806.3px">49,90</span><span class="c" style="left:1234.2px;width:200px;text-align:center">09/11/2023</span><span class="c" style="left:1415.3px">Alteração de contrato</span><span class="c" style="left:1790px;width:200px;text-align:center">S</span><span class="c" style="left:1872.3px;width:200px;text-align:center">N</span>
</div>
<div class="row" style="top:503px;background:#fff;color:#111">
<span class="abs" style="left:1928px;top:0;width:89.3px;height:30px;background:#f3f3f3"></span>
<span class="c" style="right:2037.5px">023</span><span class="c" style="right:1896px">49,90</span>
<span class="c" style="left:904.3px">Boleto</span><span class="c" style="left:962.5px;width:200px;text-align:center">Não</span>
<span class="c" style="right:806.3px">49,90</span><span class="c" style="left:1234.2px;width:200px;text-align:center">09/11/2023</span><span class="c" style="left:1415.3px">Alteração de contrato</span><span class="c" style="left:1790px;width:200px;text-align:center">S</span><span class="c" style="left:1872.3px;width:200px;text-align:center">N</span>
</div>
<div class="row" style="top:533px;background:#f7f7f7;color:#111">
<span class="abs" style="left:1928px;top:0;width:89.3px;height:30px;background:#e4e4e4"></span>
<span class="c" style="right:2037.5px">023</span><span class="c" style="right:1896px">49,90</span>
<span class="c" style="left:904.3px">Boleto</span><span class="c" style="left:962.5px;width:200px;text-align:center">Não</span>
<span class="c" style="right:806.3px">49,90</span><span class="c" style="left:1234.2px;width:200px;text-align:center">09/11/2023</span><span class="c" style="left:1415.3px">Alteração de contrato</span><span class="c" style="left:1790px;width:200px;text-align:center">N</span><span class="c" style="left:1872.3px;width:200px;text-align:center">N</span>
</div>
<div class="row" style="top:563px;background:#fff;color:#111">
<span class="abs" style="left:1928px;top:0;width:89.3px;height:30px;background:#f3f3f3"></span>
<span class="c" style="right:2037.5px">024</span><span class="c" style="right:1896px">49,90</span>
<span class="c" style="left:904.3px">Boleto</span><span class="c" style="left:962.5px;width:200px;text-align:center">Não</span>
<span class="c" style="right:806.3px">49,90</span><span class="c" style="left:1234.2px;width:200px;text-align:center">09/11/2023</span><span class="c" style="left:1415.3px">Alteração de contrato</span><span class="c" style="left:1790px;width:200px;text-align:center">N</span><span class="c" style="left:1872.3px;width:200px;text-align:center">N</span>
</div>
<div class="row" style="top:593px;background:#f7f7f7;color:#111">
<span class="abs" style="left:1928px;top:0;width:89.3px;height:30px;background:#e4e4e4"></span>
<span class="c" style="right:2037.5px">024</span><span class="c" style="right:1896px">49,90</span>
<span class="c" style="left:904.3px">Boleto</span><span class="c" style="left:962.5px;width:200px;text-align:center">Não</span>
<span class="c" style="right:806.3px">49,90</span><span class="c" style="left:1234.2px;width:200px;text-align:center">09/11/2023</span><span class="c" style="left:1415.3px">Alteração de contrato</span><span class="c" style="left:1790px;width:200px;text-align:center">N</span><span class="c" style="left:1872.3px;width:200px;text-align:center">N</span>
</div>
<div class="row" style="top:623px;background:#fff;color:#111">
<span class="abs" style="left:1928px;top:0;width:89.3px;height:30px;background:#f3f3f3"></span>
<span class="c" style="right:2037.5px">024</span><span class="c" style="right:1896px">49,90</span>
<span class="c" style="left:904.3px">Boleto</span><span class="c" style="left:962.5px;width:200px;text-align:center">Não</span>
<span class="c" style="right:806.3px">49,90</span><span class="c" style="left:1234.2px;width:200px;text-align:center">09/11/2023</span><span class="c" style="left:1415.3px">Alteração de contrato</span><span class="c" style="left:1790px;width:200px;text-align:center">N</span><span class="c" style="left:1872.3px;width:200px;text-align:center">N</span>
</div>
<div class="row" style="top:653px;background:#f7f7f7;color:#111">
<span class="abs" style="left:1928px;top:0;width:89.3px;height:30px;background:#e4e4e4"></span>
<span class="c" style="right:2037.5px">024</span><span class="c" style="right:1896px">49,90</span>
<span class="c" style="left:904.3px">Boleto</span><span class="c" style="left:962.5px;width:200px;text-align:center">Não</span>
<span class="c" style="right:806.3px">49,90</span><span class="c" style="left:1234.2px;width:200px;text-align:center">09/11/2023</span><span class="c" style="left:1415.3px">Alteração de contrato</span><span class="c" style="left:1790px;width:200px;text-align:center">N</span><span class="c" style="left:1872.3px;width:200px;text-align:center">N</span>
</div>
<div class="row" style="top:683px;background:#fff;color:#111">
<span class="abs" style="left:1928px;top:0;width:89.3px;height:30px;background:#f3f3f3"></span>
<span class="c" style="right:2037.5px">024</span><span class="c" style="right:1896px">49,90</span>
<span class="c" style="left:904.3px">Boleto</span><span class="c" style="left:962.5px;width:200px;text-align:center">Não</span>
<span class="c" style="right:806.3px">49,90</span><span class="c" style="left:1234.2px;width:200px;text-align:center">09/11/2023</span><span class="c" style="left:1415.3px">Alteração de contrato</span><span class="c" style="left:1790px;width:200px;text-align:center">N</span><span class="c" style="left:1872.3px;width:200px;text-align:center">N</span>
</div>
<div class="vl" style="left:42px"></div>
<div class="vl" style="left:172px"></div>
<div class="vl" style="left:297px"></div>
<div class="vl" style="left:419px"></div>
<div class="vl" style="left:531px"></div>
<div class="vl" style="left:642px"></div>
<div class="vl" style="left:749px"></div>
<div class="vl" style="left:894px"></div>
<div class="vl" style="left:983px"></div>
<div class="vl" style="left:1141px"></div>
<div class="vl" style="left:1262px"></div>
<div class="vl" style="left:1406px"></div>
<div class="vl" style="left:1603px"></div>
<div class="vl" style="left:1733px"></div>
<div class="vl" style="left:1852px"></div>
<div class="vl" style="left:1927px"></div>
<div class="vl" style="left:2017px"></div>
<div class="h" style="right:2036.5px">ento</div><div class="h" style="right:1896px">Valor</div><div class="h" style="right:1771px">Valor baixado</div><div class="h" style="right:1649px">Valor aberto</div><div class="h" style="right:1537.5px">Valor recebido</div>
<div class="h" style="left:540.7px;">Data pagamento</div><div class="h" style="left:546.5px;width:300px;text-align:center">Data crédito</div><div class="h" style="left:672.5px;width:300px;text-align:center">Data baixa</div><div class="h" style="left:904.3px;">Tipo</div><div class="h" style="left:912.5px;width:300px;text-align:center">Título registrado</div>
<div class="h" style="right:806.3px">Valor cancelado</div><div class="h" style="left:1184.5px;width:300px;text-align:center">Data cancelamento</div><div class="h" style="left:1415.3px;">Motivo cancelamento</div><div class="h" style="left:1519px;width:300px;text-align:center">NN Boleto</div><div class="h" style="left:1643px;width:300px;text-align:center">NN Imp.</div><div class="h" style="left:1740px;width:300px;text-align:center">Impresso</div>
<div class="h b" style="left:1937.1px;width:80.5px;overflow:hidden;color:#222">Libera período</div>
<div class="h" style="left:2027.1px;">Ramal</div>
<div class="abs" style="left:1971.6px;top:172.3px;width:0;height:0;border:4.7px solid transparent;border-top:5px solid #222;border-bottom:none"></div>
<div class="abs" style="left:0;top:713px;width:2060px;height:14.5px;background:#f1f1f1"></div>
<div class="abs" style="left:435px;top:715.3px;width:1027px;height:10.4px;background:#c1c1c1"></div>
<div class="abs" style="left:5px;top:716.3px;width:0;height:0;border:4px solid transparent;border-right:5px solid #4a4a4a;border-left:none"></div>
<div class="abs" style="left:2051px;top:716.3px;width:0;height:0;border:4px solid transparent;border-left:5px solid #4a4a4a;border-right:none"></div>
<svg style="position:absolute;left:13.5px;top:737px;width:12.5px;height:12.5px;" viewBox="0 0 512 512" preserveAspectRatio="none"><path fill="#2196f3" d="M256 8C119.043 8 8 119.083 8 256c0 136.997 111.043 248 248 248s248-111.003 248-248C504 119.083 392.957 8 256 8zm0 110c23.196 0 42 18.804 42 42s-18.804 42-42 42-42-18.804-42-42 18.804-42 42-42zm56 254c0 6.627-5.373 12-12 12h-88c-6.627 0-12-5.373-12-12v-24c0-6.627 5.373-12 12-12h12v-64h-12c-6.627 0-12-5.373-12-12v-24c0-6.627 5.373-12 12-12h64c6.627 0 12 5.373 12 12v100h12c6.627 0 12 5.373 12 12v24z"/></svg>
<div class="t b" style="left:38px;top:735px;color:#111">Legenda de cores</div>
<div class="t ft" style="right:12.5px;top:735px;color:#111"><span>Valor:</span><b>3.369,37</b><span>Valor baixado:</span><b>230,06</b><span>Valor aberto:</span><b>587,90</b><span>Valor cancelado:</span><b>2.551,41</b></div>
<div class="abs" style="left:840.1px;top:131.9px;width:161.69999999999993px;height:40.900000000000006px;border:4px solid #ff0000"></div>
<div class="abs" style="left:1919px;top:151px;width:114.90000000000009px;height:577.7px;border:4px solid #ff0000"></div>
</div>
</body></html>
